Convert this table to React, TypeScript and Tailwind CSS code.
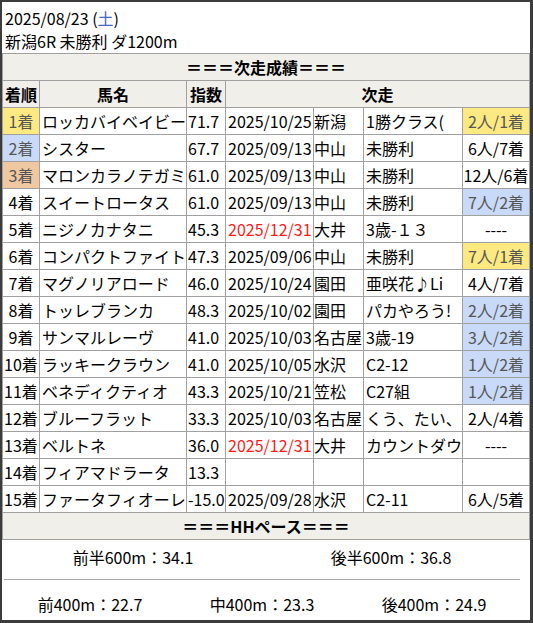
import React from 'react';

type Row = {
  rank: string;
  name: string;
  score: string;
  date?: string;
  redDate?: boolean;
  venue?: string;
  race?: string;
  result?: string;
  rankBg?: string;
  resultBg?: string;
};

const rows: Row[] = [
  { rank: '1着', name: 'ロッカバイベイビー', score: '71.7', date: '2025/10/25', venue: '新潟', race: '1勝クラス(', result: '2人/1着', rankBg: 'bg-[#fde982]', resultBg: 'bg-[#fde982]' },
  { rank: '2着', name: 'シスター', score: '67.7', date: '2025/09/13', venue: '中山', race: '未勝利', result: '6人/7着', rankBg: 'bg-[#c9daf8]' },
  { rank: '3着', name: 'マロンカラノテガミ', score: '61.0', date: '2025/09/13', venue: '中山', race: '未勝利', result: '12人/6着', rankBg: 'bg-[#efc7a0]' },
  { rank: '4着', name: 'スイートロータス', score: '61.0', date: '2025/09/13', venue: '中山', race: '未勝利', result: '7人/2着', resultBg: 'bg-[#c9daf8]' },
  { rank: '5着', name: 'ニジノカナタニ', score: '45.3', date: '2025/12/31', redDate: true, venue: '大井', race: '3歳-１３', result: '----' },
  { rank: '6着', name: 'コンパクトファイト', score: '47.3', date: '2025/09/06', venue: '中山', race: '未勝利', result: '7人/1着', resultBg: 'bg-[#fde982]' },
  { rank: '7着', name: 'マグノリアロード', score: '46.0', date: '2025/10/24', venue: '園田', race: '亜咲花♪Li', result: '4人/7着' },
  { rank: '8着', name: 'トッレブランカ', score: '48.3', date: '2025/10/02', venue: '園田', race: 'パカやろう!', result: '2人/2着', resultBg: 'bg-[#c9daf8]' },
  { rank: '9着', name: 'サンマルレーヴ', score: '41.0', date: '2025/10/03', venue: '名古屋', race: '3歳-19', result: '3人/2着', resultBg: 'bg-[#c9daf8]' },
  { rank: '10着', name: 'ラッキークラウン', score: '41.0', date: '2025/10/05', venue: '水沢', race: 'C2-12', result: '1人/2着', resultBg: 'bg-[#c9daf8]' },
  { rank: '11着', name: 'ベネディクティオ', score: '43.3', date: '2025/10/21', venue: '笠松', race: 'C27組', result: '1人/2着', resultBg: 'bg-[#c9daf8]' },
  { rank: '12着', name: 'ブルーフラット', score: '33.3', date: '2025/10/03', venue: '名古屋', race: 'くう、たい、', result: '2人/4着' },
  { rank: '13着', name: 'ベルトネ', score: '36.0', date: '2025/12/31', redDate: true, venue: '大井', race: 'カウントダウ', result: '----' },
  { rank: '14着', name: 'フィアマドラータ', score: '13.3' },
  { rank: '15着', name: 'ファータフィオーレ', score: '-15.0', date: '2025/09/28', venue: '水沢', race: 'C2-11', result: '6人/5着' },
];

const cell = 'h-[27px] p-0 border-r border-b border-[#a0a0a0] whitespace-nowrap overflow-hidden align-middle leading-[26px]';
const head = 'bg-[#f0efea] font-bold text-center';

export default function App() {
  return (
    <div className="w-[533px] h-[623px] bg-[#3c3c3c] pt-[2px] pl-[2px] font-['Noto_Sans_CJK_JP',sans-serif] text-[16px] text-black">
      <div className="w-[528px] h-[618px] bg-white overflow-hidden">
        {/* race info */}
        <div className="h-[52px] pt-[5px] pl-[3px] leading-[23px] border-b border-[#a0a0a0]">
          <div>
            2025/08/23 (<span className="text-[#4466cc]">土</span>)
          </div>
          <div>新潟6R 未勝利 ダ1200m</div>
        </div>

        <table className="table-fixed border-separate border-spacing-0 w-[528px]">
          <colgroup>
            <col className="w-[38px]" />
            <col className="w-[147px]" />
            <col className="w-[39px]" />
            <col className="w-[88px]" />
            <col className="w-[50px]" />
            <col className="w-[99px]" />
            <col className="w-[67px]" />
          </colgroup>
          <tbody>
            <tr>
              <td colSpan={7} className={`${cell} ${head} border-l`}>＝＝＝次走成績＝＝＝</td>
            </tr>
            <tr>
              <td className={`${cell} ${head} border-l`}>着順</td>
              <td className={`${cell} ${head}`}>馬名</td>
              <td className={`${cell} ${head}`}>指数</td>
              <td colSpan={4} className={`${cell} ${head}`}>次走</td>
            </tr>
            {rows.map((r) => (
              <tr key={r.rank}>
                <td className={`${cell} border-l text-center ${r.rankBg ? `${r.rankBg} text-[#555]` : ''}`}>{r.rank}</td>
                <td className={`${cell} pl-[2px]`}>{r.name}</td>
                <td className={`${cell} pl-[1px]`}>{r.score}</td>
                <td className={`${cell} pl-[2px] ${r.redDate ? 'text-[#ff1a1a]' : ''}`}>{r.date}</td>
                <td className={`${cell}`}>{r.venue}</td>
                <td className={`${cell} pl-[2px]`}>{r.race}</td>
                <td className={`${cell} text-center ${r.resultBg ? `${r.resultBg} text-[#555]` : ''}`}>{r.result}</td>
              </tr>
            ))}
            <tr>
              <td colSpan={7} className={`${cell} ${head} border-l`}>＝＝＝HHペース＝＝＝</td>
            </tr>
          </tbody>
        </table>

        {/* pace */}
        <div className="ml-[2px] w-[516px]">
          <div className="grid grid-cols-2 h-[40px] pt-[6px] leading-[23px] text-center border-b border-[#a8a8a8]">
            <div>前半600m：34.1</div>
            <div>後半600m：36.8</div>
          </div>
          <div className="grid grid-cols-3 pt-[13px] leading-[23px] text-center">
            <div>前400m：22.7</div>
            <div>中400m：23.3</div>
            <div>後400m：24.9</div>
          </div>
        </div>
      </div>
    </div>
  );
}
